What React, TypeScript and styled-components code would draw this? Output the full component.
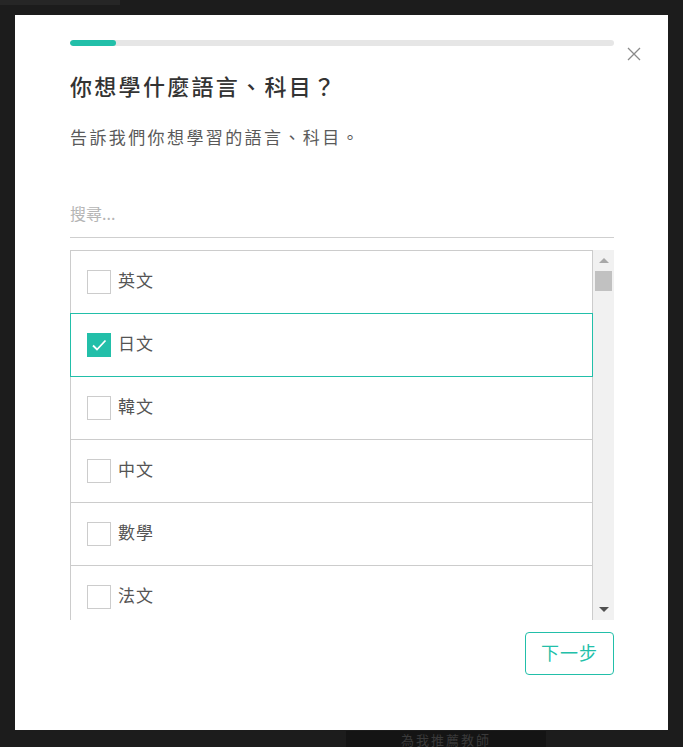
import React, { useState } from "react";
import styled, { createGlobalStyle } from "styled-components";

const GlobalStyle = createGlobalStyle`
  html, body { margin: 0; padding: 0; background: #1b1b1b; }
  body {
    width: 683px; height: 747px; overflow: hidden;
    font-family: "Noto Sans CJK TC", "Noto Sans", sans-serif;
  }
  * { box-sizing: border-box; }
`;

const TEAL = "#22bfa9";

const Page = styled.div`
  position: relative;
  width: 683px;
  height: 747px;
  background: #1c1c1c;
  overflow: hidden;
`;

const TopStrip = styled.div`
  width: 120px;
  height: 5px;
  background: #262626;
`;

const BgButton = styled.div`
  position: absolute;
  left: 346px;
  top: 731px;
  width: 200px;
  height: 16px;
  background: #141414;
  display: flex;
  align-items: center;
  justify-content: center;
  color: #3a3a3a;
  font-size: 13px;
  line-height: 15px;
  letter-spacing: 2px;
`;

const Overlay = styled.div`
  position: absolute;
  inset: 0;
  padding: 15px;
  display: flex;
  justify-content: center;
  align-items: flex-start;
`;

const Modal = styled.div`
  position: relative;
  width: 653px;
  height: 715px;
  background: #fff;
  padding: 25px 54px 0 55px;
  display: flex;
  flex-direction: column;
`;

const Close = styled.button`
  position: absolute;
  top: 32px;
  right: 27px;
  width: 14px;
  height: 14px;
  padding: 0;
  border: 0;
  background: none;
  cursor: pointer;
  display: flex;
`;

const Progress = styled.div`
  height: 6px;
  border-radius: 3px;
  background: #e6e6e6;
  overflow: hidden;
`;

const ProgressFill = styled.div`
  height: 100%;
  border-radius: 3px;
  background: ${TEAL};
`;

const Title = styled.h2`
  margin: 24px 0 0;
  font-size: 22px;
  line-height: 30px;
  font-weight: 500;
  letter-spacing: 2.3px;
  color: #333;
`;

const Subtitle = styled.p`
  margin: 24px 0 0;
  font-size: 17px;
  line-height: 26px;
  letter-spacing: 2.4px;
  color: #5a5a5a;
`;

const Search = styled.input`
  margin-top: 42px;
  height: 46px;
  width: 100%;
  border: 0;
  border-bottom: 1px solid #cfcfcf;
  padding: 0 0 4px;
  font-family: inherit;
  font-size: 16px;
  color: #333;
  outline: none;
  &::placeholder { color: #b5b5b5; }
`;

const ListWrap = styled.div`
  margin-top: 12px;
  height: 370px;
  display: flex;
`;

const List = styled.div`
  flex: 1;
  overflow: hidden;
  display: flex;
  flex-direction: column;
`;

const Row = styled.label<{ $on: boolean }>`
  position: relative;
  flex: none;
  height: 64px;
  margin-top: -1px;
  &:first-child { margin-top: 0; }
  border: 1px solid ${(p) => (p.$on ? TEAL : "#cccccc")};
  z-index: ${(p) => (p.$on ? 1 : 0)};
  display: flex;
  align-items: center;
  padding-left: 16px;
  gap: 7px;
  cursor: pointer;
  background: #fff;
`;

const Box = styled.span<{ $on: boolean }>`
  width: 24px;
  height: 24px;
  margin-top: -1px;
  border: 1px solid ${(p) => (p.$on ? TEAL : "#cccccc")};
  background: ${(p) => (p.$on ? TEAL : "#fff")};
  display: flex;
  align-items: center;
  justify-content: center;
`;

const Label = styled.span`
  font-size: 17px;
  line-height: 24px;
  padding-bottom: 4px;
  letter-spacing: 1px;
  color: #555;
`;

const ScrollBar = styled.div`
  width: 21px;
  background: #f1f1f1;
  display: flex;
  flex-direction: column;
  align-items: center;
  padding: 8px 0 8px;
`;

const Arrow = styled.span<{ $dir: "up" | "down"; $color: string }>`
  width: 0;
  height: 0;
  border-left: 5px solid transparent;
  border-right: 5px solid transparent;
  ${(p) =>
    p.$dir === "up"
      ? `border-bottom: 5px solid ${p.$color};`
      : `border-top: 5px solid ${p.$color};`}
`;

const Track = styled.div`
  flex: 1;
  width: 100%;
  padding: 8px 2px 0;
`;

const Thumb = styled.div`
  height: 20px;
  background: #c1c1c1;
`;

const Footer = styled.div`
  margin-top: 12px;
  display: flex;
  justify-content: flex-end;
`;

const NextButton = styled.button`
  width: 89px;
  height: 43px;
  border: 1.5px solid ${TEAL};
  border-radius: 4px;
  background: #fff;
  color: ${TEAL};
  font-family: inherit;
  font-size: 18px;
  letter-spacing: 1px;
  padding: 0 0 3px;
  cursor: pointer;
`;

const subjects = ["英文", "日文", "韓文", "中文", "數學", "法文"];

export default function App() {
  const [checked, setChecked] = useState<string[]>(["日文"]);
  const toggle = (s: string) =>
    setChecked((c) => (c.includes(s) ? c.filter((x) => x !== s) : [...c, s]));

  return (
    <>
      <GlobalStyle />
      <Page>
        <TopStrip />
        <BgButton>為我推薦教師</BgButton>
        <Overlay>
          <Modal>
            <Close aria-label="close">
              <svg width="14" height="14" viewBox="0 0 14 14">
                <path d="M1 1L13 13M13 1L1 13" stroke="#8a8a8a" strokeWidth="1.3" fill="none" />
              </svg>
            </Close>
            <Progress>
              <ProgressFill style={{ width: "8.4%" }} />
            </Progress>
            <Title>你想學什麼語言、科目？</Title>
            <Subtitle>告訴我們你想學習的語言、科目。</Subtitle>
            <Search placeholder="搜尋..." />
            <ListWrap>
              <List>
                {subjects.map((s) => {
                  const on = checked.includes(s);
                  return (
                    <Row key={s} $on={on} onClick={() => toggle(s)}>
                      <Box $on={on}>
                        {on && (
                          <svg width="18" height="18" viewBox="0 0 18 18">
                            <path d="M3 9.5L7 13.5L15.5 4.5" stroke="#fff" strokeWidth="1.8" fill="none" />
                          </svg>
                        )}
                      </Box>
                      <Label>{s}</Label>
                    </Row>
                  );
                })}
              </List>
              <ScrollBar>
                <Arrow $dir="up" $color="#a8a8a8" />
                <Track>
                  <Thumb />
                </Track>
                <Arrow $dir="down" $color="#505050" />
              </ScrollBar>
            </ListWrap>
            <Footer>
              <NextButton>下一步</NextButton>
            </Footer>
          </Modal>
        </Overlay>
      </Page>
    </>
  );
}
